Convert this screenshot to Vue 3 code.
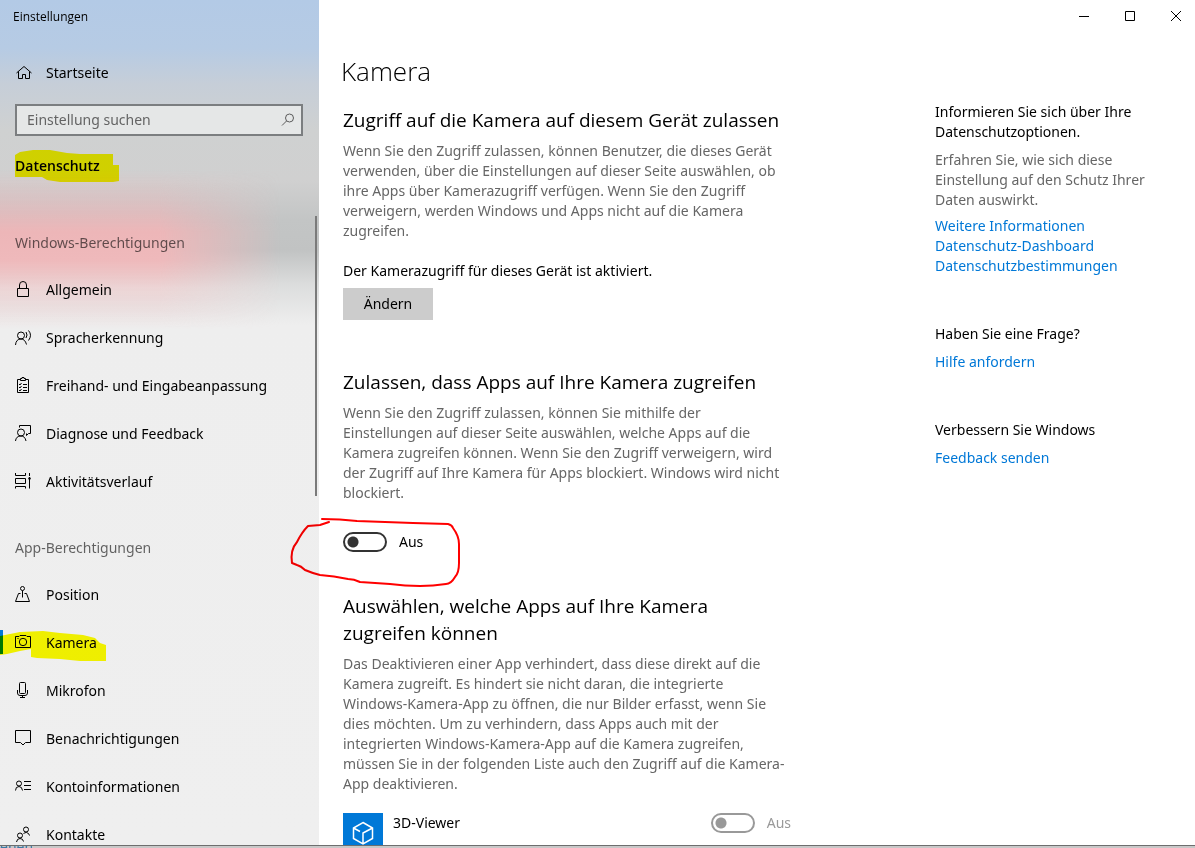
<template>
    <div class="screen">
        <div class="window">
            <aside class="sidebar">
                <div class="title">Einstellungen</div>
                <a class="item" href="#">
                    <svg class="icon" viewBox="0 0 18 18"><path d="M2.5 9L10 2.5L17.5 9M4.5 7.5V14.5H8.500V10.500H11.500V14.500H15.500V7.5" /></svg>
                    <span>Startseite</span>
                </a>
                <div class="search">
                    <input type="text" placeholder="Einstellung suchen" aria-label="Einstellung suchen" />
                    <svg class="lens" viewBox="0 0 14 14"><circle cx="8.500" cy="5" r="4" /><path d="M5.500 8L1 12.500" /></svg>
                </div>
                <h2 class="area">Datenschutz</h2>
                <nav v-for="group in groups" :key="group.name" class="group">
                    <h3>{{ group.name }}</h3>
                    <a
                        v-for="entry in group.entries"
                        :key="entry.label"
                        class="item"
                        :class="{ active: entry.label === current }"
                        href="#"
                        @click.prevent="current = entry.label"
                    >
                        <svg class="icon" viewBox="0 0 18 18"><path :d="entry.icon" /></svg>
                        <span>{{ entry.label }}</span>
                    </a>
                </nav>
                <div class="thumb"></div>
            </aside>

            <div class="page">
                <div class="controls">
                    <button type="button" aria-label="Minimieren"><svg viewBox="0 0 12 12"><path d="M1 6.500H11" /></svg></button>
                    <button type="button" aria-label="Maximieren"><svg viewBox="0 0 12 12"><path d="M1.500 1.500H10.500V10.500H1.500Z" /></svg></button>
                    <button type="button" aria-label="Schließen"><svg viewBox="0 0 12 12"><path d="M1 1L11 11M11 1L1 11" /></svg></button>
                </div>
                <h1>Kamera</h1>
                <div class="columns">
                    <main class="content">
                        <section>
                            <h2>Zugriff auf die Kamera auf diesem Gerät zulassen</h2>
                            <p class="muted">
                                Wenn Sie den Zugriff zulassen, können Benutzer, die dieses Gerät<br />
                                verwenden, über die Einstellungen auf dieser Seite auswählen, ob<br />
                                ihre Apps über Kamerazugriff verfügen. Wenn Sie den Zugriff<br />
                                verweigern, werden Windows und Apps nicht auf die Kamera<br />
                                zugreifen.
                            </p>
                            <p class="status">Der Kamerazugriff für dieses Gerät ist aktiviert.</p>
                            <button type="button" class="change">Ändern</button>
                        </section>
                        <section>
                            <h2>Zulassen, dass Apps auf Ihre Kamera zugreifen</h2>
                            <p class="muted">
                                Wenn Sie den Zugriff zulassen, können Sie mithilfe der<br />
                                Einstellungen auf dieser Seite auswählen, welche Apps auf die<br />
                                Kamera zugreifen können. Wenn Sie den Zugriff verweigern, wird<br />
                                der Zugriff auf Ihre Kamera für Apps blockiert. Windows wird nicht<br />
                                blockiert.
                            </p>
                            <label class="toggle">
                                <input v-model="access" type="checkbox" />
                                <span>{{ access ? "Ein" : "Aus" }}</span>
                            </label>
                        </section>
                        <section>
                            <h2>Auswählen, welche Apps auf Ihre Kamera<br />zugreifen können</h2>
                            <p class="muted">
                                Das Deaktivieren einer App verhindert, dass diese direkt auf die<br />
                                Kamera zugreift. Es hindert sie nicht daran, die integrierte<br />
                                Windows-Kamera-App zu öffnen, die nur Bilder erfasst, wenn Sie<br />
                                dies möchten. Um zu verhindern, dass Apps auch mit der<br />
                                integrierten Windows-Kamera-App auf die Kamera zugreifen,<br />
                                müssen Sie in der folgenden Liste auch den Zugriff auf die Kamera-<br />
                                App deaktivieren.
                            </p>
                            <div class="app">
                                <svg class="tile" viewBox="0 0 40 40">
                                    <path d="M20 9.500L29.500 15V25.500L20 31L10.500 25.500V15ZM10.500 15L17 18.500M29.500 15L20 20V31" />
                                </svg>
                                <span class="name">3D-Viewer</span>
                                <label class="toggle">
                                    <input type="checkbox" disabled />
                                    <span>Aus</span>
                                </label>
                            </div>
                        </section>
                    </main>

                    <aside class="help">
                        <section>
                            <h4>Informieren Sie sich über Ihre<br />Datenschutzoptionen.</h4>
                            <p class="muted">Erfahren Sie, wie sich diese<br />Einstellung auf den Schutz Ihrer<br />Daten auswirkt.</p>
                            <a href="#">Weitere Informationen</a>
                            <a href="#">Datenschutz-Dashboard</a>
                            <a href="#">Datenschutzbestimmungen</a>
                        </section>
                        <section>
                            <h4>Haben Sie eine Frage?</h4>
                            <a href="#">Hilfe anfordern</a>
                        </section>
                        <section>
                            <h4>Verbessern Sie Windows</h4>
                            <a href="#">Feedback senden</a>
                        </section>
                    </aside>
                </div>
            </div>
        </div>
        <div class="behind">ehen</div>

        <svg class="ink" width="480" height="680" viewBox="0 0 480 680">
            <path class="marker" d="M15 155L20 152L33 150H50L67 153L80 154H113V165H119V181L113 182H60L47 180L42 177H15Z" />
            <path class="marker" d="M0 636L20 632L43 631L60 633L83 635L95 638L100 643L106 645V661H80L60 659L37 658L31 657V649L20 651L7 654L0 655Z" />
            <path class="pen" d="M322 519Q340 519 357 521L413 523L448 524Q452 525 453 528Q459 536 459 544V563Q459 573 455 577Q451 584 446 584Q433 586 420 586Q405 586 390 584L360 582Q354 579 348 579Q334 576 320 575Q312 573 305 570Q301 566 297 565L292 563Q290 550 297 542Q302 532 308 526L320 525L329 522" />
        </svg>
    </div>
</template>

<script setup>
import { ref } from "vue";

const current = ref("Kamera");
const access = ref(false);

const groups = [
    {
        name: "Windows-Berechtigungen",
        entries: [
            { label: "Allgemein", icon: "M3.5 7.5H14.5V15.5H3.5ZM5.5 7.5V4a3.500 3.500 0 0 1 7 0V7.5" },
            { label: "Spracherkennung", icon: "M3.5 6.500a3.500 3.500 0 1 0 7 0a3.500 3.500 0 1 0 -7 0M1.500 16Q2 10 7 10Q11 10 12.500 15.500M12 3Q14 6 12 9M14.500 1.500Q18.500 6 14.500 11.500" },
            { label: "Freihand- und Eingabeanpassung", icon: "M6 2.500H3.500V15.500H14.500V2.500H12M6.500 3.500V1.500H8V.5H10V1.500H11.500V3.500ZM5 7L6 8L7.500 6M5 10L6 11L7.500 9M5 13L6 14L7.500 12M9 7.500H13M9 10.500H13M9 13.500H13" },
            { label: "Diagnose und Feedback", icon: "M3.5 7.500a3.500 3.500 0 1 0 7 0a3.500 3.500 0 1 0 -7 0M1.500 16Q2 11 7 11Q11 11 12 16M5.500 2.500V.5H16.500V8.500H14.500L12.500 10.500V8.500" },
            { label: "Aktivitätsverlauf", icon: "M1.500 0V2.500H11.500V0M1.500 5.500H11.500V10.500H1.500ZM1.500 15.500V13.500H11.500V15.500M15.500 0V3M15.500 7V15.500M14.500 5.500H16.500M15 4.500H16V6.500H15Z" }
        ]
    },
    {
        name: "App-Berechtigungen",
        entries: [
            { label: "Position", icon: "M6.500 2.500a2 2 0 1 0 4 0a2 2 0 1 0 -4 0M8.500 4.500V11.500M6.500 7.500H4.500L1.500 15.500H15.500L12.500 7.500H10.500" },
            { label: "Kamera", icon: "M1.500 2.500H5L6 1.500H12L13 2.500H16.500V13.500H1.500ZM5.300 8a3.700 3.700 0 1 0 7.400 0a3.700 3.700 0 1 0 -7.400 0M3.500 4.500H4.500" },
            { label: "Mikrofon", icon: "M5.500 1.500Q5.500 .5 6.500 .5H10.500Q11.500 .5 11.500 1.500V10.500Q11.500 11.500 10.500 11.500H6.500Q5.500 11.500 5.500 10.500ZM3.500 8V11Q3.500 13.500 6 13.500H11Q13.500 13.500 13.500 11V8M8.500 13.500V15.500M6 15.500H11" },
            { label: "Benachrichtigungen", icon: "M1.500 .5H16.500V12.500H11.500L9 15L6.500 12.500H1.500Z" },
            { label: "Kontoinformationen", icon: "M2.500 5.500a2.500 2.500 0 1 0 5 0a2.500 2.500 0 1 0 -5 0M1.500 12.500Q1.500 8.500 5 8.500Q8 8.500 8.500 12.500M10 3.500H17M10 7.500H17M10 11.500H17" },
            { label: "Kontakte", icon: "M9.500 3.500a2.500 2.500 0 1 0 5 0a2.500 2.500 0 1 0 -5 0M3.500 9.500a2.500 2.500 0 1 0 5 0a2.500 2.500 0 1 0 -5 0M2.500 16Q3 12.500 6 12.500Q9 12.500 9.500 15.500M9.500 7.500Q11 6.500 12.500 6.500Q15 7 15.500 9.500" }
        ]
    }
];
</script>

<style>
body {
    margin: 0;
    background: #fff;
}
</style>

<style scoped>
.screen {
    position: relative;
    display: flex;
    flex-direction: column;
    height: 100vh;
    overflow: hidden;
    font-family: "Noto Sans", "Open Sans", sans-serif;
    font-size: 14px;
    line-height: 20px;
    color: #000;
}

h1, h2, h3, h4, p {
    margin: 0;
    font-weight: 400;
}

button, input {
    font: inherit;
    color: inherit;
}

.window {
    display: flex;
    flex: 1;
    min-height: 0;
    overflow: hidden;
    border-bottom: 1px solid #6e6e6e;
}

/* sidebar */
.sidebar {
    position: relative;
    isolation: isolate;
    flex: 0 0 319px;
    box-sizing: border-box;
    overflow: hidden;
    background: linear-gradient(#b3cae6 0, #b6cbe4 48px, #c6ced8 84px, #cfd1d1 130px, #d0d0d0 180px, #c3c5c5 220px, #c1c3c3 250px, #dcdddd 285px, #eeeeee 325px, #efefef 100%);
}

/* wallpaper showing through behind the first group */
.sidebar::before {
    content: "";
    position: absolute;
    z-index: -1;
    top: 170px;
    left: 0;
    width: 100%;
    height: 160px;
    background: linear-gradient(#efb7b900 0, #efb7b966 30px, #edb6b8 62px, #efb9bb 90px, #f3d0d1b0 118px, #f3e0e000 160px);
    mask-image: linear-gradient(90deg, #000 50%, #0009 66%, transparent 88%);
}

.title {
    padding: 7px 13px 22px;
    font-family: "Open Sans", sans-serif;
    font-size: 12px;
}

.item {
    position: relative;
    display: flex;
    align-items: center;
    gap: 14px;
    height: 48px;
    padding-left: 14px;
    color: #000;
    text-decoration: none;
}

.item.active::before {
    content: "";
    position: absolute;
    left: 0;
    top: 11px;
    width: 3px;
    height: 24px;
    background: #0078d7;
}

.icon {
    width: 18px;
    height: 18px;
}

svg {
    fill: none;
    stroke: #000;
    stroke-width: 1;
}

.search {
    display: flex;
    align-items: center;
    box-sizing: border-box;
    height: 32px;
    margin: 7px 16px 6px 15px;
    padding: 0 6px 0 10px;
    border: 2px solid #7b7e80;
    background: #e5e7e7;
}

.search input {
    flex: 1;
    min-width: 0;
    padding: 0;
    border: 0;
    outline: 0;
    background: transparent;
}

.search input::placeholder {
    color: #646464;
    opacity: 1;
}

.lens {
    width: 14px;
    height: 14px;
    stroke: #5c5c5c;
}

.area {
    padding-left: 15px;
    margin-bottom: 30px;
    font-family: "Open Sans", sans-serif;
    font-size: 14px;
    font-weight: 600;
    line-height: 48px;
}

.group {
    margin-bottom: 19px;
}

.group h3 {
    padding-left: 15px;
    font-size: 14px;
    line-height: 46px;
    color: #00000099;
}

.thumb {
    position: absolute;
    top: 216px;
    right: 2px;
    width: 2px;
    height: 280px;
    background: #7a7a7a;
}

/* page */
.page {
    flex: 1;
    min-width: 0;
    background: #fff;
}

.controls {
    display: flex;
    justify-content: flex-end;
    height: 32px;
    margin-right: -4px;
}

.controls button {
    display: grid;
    place-items: center;
    width: 46px;
    padding: 0;
    border: 0;
    background: transparent;
}

.controls svg {
    width: 12px;
    height: 12px;
}

h1 {
    padding: 20px 0 0 22px;
    font-family: "Open Sans", sans-serif;
    font-size: 26px;
    font-weight: 300;
    line-height: 38px;
}

.columns {
    display: flex;
    justify-content: space-between;
    gap: 24px;
    padding: 12px 24px 0;
}

.content {
    flex: 0 0 448px;
    padding-top: 5px;
    white-space: nowrap;
}

.content h2 {
    margin-bottom: 7px;
    font-family: "Open Sans", sans-serif;
    font-size: 19px;
    line-height: 27px;
}

.muted {
    color: #666;
}

.status {
    margin: 20px 0 7px;
}

.change {
    display: block;
    width: 90px;
    height: 32px;
    margin-bottom: 49px;
    padding: 0;
    border: 0;
    background: #ccc;
}

.toggle {
    display: flex;
    align-items: center;
    gap: 12px;
    height: 20px;
}

.content section > .toggle {
    margin: 29px 0 41px;
}

.toggle input {
    appearance: none;
    box-sizing: border-box;
    width: 44px;
    height: 20px;
    margin: 0;
    border: 2px solid #333;
    border-radius: 10px;
    background: radial-gradient(circle at 8px 8px, #333 5px, transparent 6px);
}

.toggle input:checked {
    border-color: #0078d7;
    background: radial-gradient(circle at 32px 8px, #fff 5px, #0078d7 6px);
}

.toggle input:disabled {
    border-color: #999;
    background: radial-gradient(circle at 8px 8px, #999 5px, transparent 6px);
}

.toggle input:disabled + span {
    color: #999;
}

.app {
    display: flex;
    align-items: flex-start;
    gap: 10px;
    margin-top: 19px;
}

.name {
    flex: 1;
}

.tile {
    width: 40px;
    height: 40px;
    background: #0078d7;
    stroke: #fff;
    stroke-width: 1.500;
}

.help {
    flex: 0 0 236px;
}

.help section {
    margin-bottom: 48px;
}

.help h4 {
    margin-bottom: 8px;
}

.help .muted {
    margin-bottom: 6px;
}

.help a {
    display: block;
    color: #0078d7;
    text-decoration: none;
}

/* window underneath */
.behind {
    height: 2px;
    overflow: hidden;
    line-height: 2px;
    color: #3d7ba5;
    background: #c8c8c8;
}

/* annotations */
.ink {
    position: absolute;
    top: 0;
    left: 0;
    pointer-events: none;
    mix-blend-mode: multiply;
}

.marker {
    fill: #ffff00;
    stroke: none;
}

.pen {
    stroke: #ff0000;
    stroke-width: 2;
    stroke-linecap: round;
    stroke-linejoin: round;
}
</style>
